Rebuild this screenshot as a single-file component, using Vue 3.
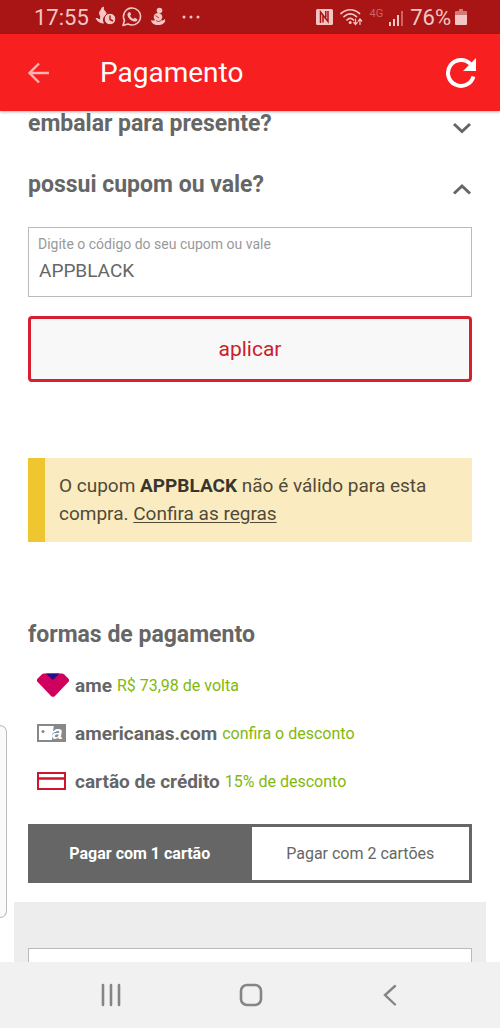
<script setup>
import { ref } from 'vue'

const coupon = ref('APPBLACK')
const cards = ref(1)
const giftOpen = ref(false)
const couponOpen = ref(true)
const methods = [
  { id: 'ame', name: 'ame', note: 'R$ 73,98 de volta' },
  { id: 'store', name: 'americanas.com', note: 'confira o desconto' },
  { id: 'credit', name: 'cartão de crédito', note: '15% de desconto' }
]
</script>

<template>
  <div class="screen">
    <div class="status">
      <span class="clock">17:55</span>
      <svg class="alerts" width="116" height="24" viewBox="0 0 116 24" aria-hidden="true">
        <path d="M6 4c1-2 2-2.500 3-2-.6 2 .2 3 1.600 4.500 1.500 1.600 1 3.500-.4 4.500-2.500 1.500-3 4-1.200 7.500-3.500 0-7-1.800-8.500-5.500 1.500-.4 3 .3 4 1.500C6.500 12 4 10 4 8c0-1.800 1.700-2.500 2-4z" fill="#f3c6c4" />
        <circle cx="15" cy="14" r="5.800" fill="#f3c6c4" stroke="#a91515" stroke-width="1" />
        <path d="M15 10.500V14.500L18 16" fill="none" stroke="#a91515" stroke-width="1.400" />
        <path d="M28 20.500l1.500-5A8.500 8.500 0 1 1 33 19z" fill="none" stroke="#f3c6c4" stroke-width="1.600" stroke-linejoin="round" />
        <path d="M33.500 7.500c.8-.8 1.600-.7 2 .3l.6 1.600-1 1.300c.7 1.500 1.700 2.500 3.200 3.200l1.300-1.200 2 1c1 .5.900 1.200.3 2-1.200 1.300-2.800 1-4.400.3-2-1-3.700-2.700-4.600-4.600-.7-1.600-.6-3 .6-3.900z" fill="#f3c6c4" />
        <circle cx="64.500" cy="5.500" r="2.800" fill="#f3c6c4" />
        <path d="M60 9c3-2 6-1 7 1.500.8 2-.2 3.500-1 4.500 1.300 1 2.800.3 4-1 1 4-3 6-7 6s-6.500-1.500-7-5c1.500.8 3 .8 4 0-1.600-1.500-1.800-4 0-6z" fill="#f3c6c4" />
        <path d="M60.500 10.500l3.500 2.500M61 15.500c2 1.500 4 1 5.500-.5" fill="none" stroke="#a91515" stroke-width=".8" />
        <g fill="#f3c6c4"><circle cx="89" cy="12" r="1.500" /><circle cx="96" cy="12" r="1.500" /><circle cx="103" cy="12" r="1.500" /></g>
      </svg>
      <svg class="signals" width="50" height="24" viewBox="0 0 50 24" aria-hidden="true">
        <rect x="1" y="4" width="17" height="16" rx="1.500" fill="#f3c6c4" />
        <path d="M5.500 18V7l7.500 9.500V6M8 17.500v-7M10.800 6v6.500" fill="none" stroke="#a91515" stroke-width="1.500" />
        <g fill="none" stroke="#f3c6c4" stroke-width="1.700" stroke-linecap="round">
          <path d="M26 8.500c5.500-5 13-5 18.500 0M29 11.700c4-3.500 8.500-3.500 12.500 0M32 15c2-2 4.500-2 6.500 0" />
          <path d="M40.500 14v5M38.800 17.500l1.700 2 1.700-2M45 19.500v-5M43.300 16l1.700-2 1.700 2" stroke-width="1.200" />
        </g>
        <circle cx="35.200" cy="17.500" r="1.500" fill="#f3c6c4" />
      </svg>
      <span class="network">4G</span>
      <svg width="16" height="24" viewBox="0 0 16 24" aria-hidden="true">
        <g fill="#f3c6c4"><rect x="0" y="17" width="2" height="4" /><rect x="4" y="14" width="2" height="7" /><rect x="8" y="10" width="2" height="11" /></g>
        <rect x="12" y="6" width="2" height="15" fill="#cc6461" />
      </svg>
      <span class="percent">76%</span>
      <svg width="12" height="24" viewBox="0 0 12 24" aria-hidden="true">
        <path d="M4 4h4v2h3a1 1 0 0 1 1 1v3H0V7a1 1 0 0 1 1-1h3z" fill="#d07b78" />
        <path d="M0 10h12v9a1 1 0 0 1-1 1H1a1 1 0 0 1-1-1z" fill="#f3c6c4" />
      </svg>
    </div>

    <header class="topbar">
      <button type="button" class="plain" aria-label="Voltar">
        <svg width="24" height="24" viewBox="0 0 24 24"><path d="M22 12H2.500M12 2.500L2.500 12l9.500 9.500" fill="none" stroke="#ffb3b0" stroke-width="2.400" /></svg>
      </button>
      <h1>Pagamento</h1>
      <button type="button" class="plain" aria-label="Recarregar">
        <svg width="32" height="32" viewBox="0 0 32 32">
          <path d="M28.500 19.500A13 13 0 1 1 25.500 7" fill="none" stroke="#fff" stroke-width="4" />
          <path d="M31 1v13H18z" fill="#fff" />
        </svg>
      </button>
    </header>

    <main>
      <div class="content">
        <h2 class="fold">
          <button type="button" :aria-expanded="giftOpen" @click="giftOpen = !giftOpen">
            <span>embalar para presente?</span>
            <svg width="20" height="12" viewBox="0 0 20 12" aria-hidden="true"><path d="M2 2l8 7.500L18 2" fill="none" stroke="#666" stroke-width="3" /></svg>
          </button>
        </h2>
        <h2 class="fold">
          <button type="button" :aria-expanded="couponOpen" @click="couponOpen = !couponOpen">
            <span>possui cupom ou vale?</span>
            <svg width="20" height="12" viewBox="0 0 20 12" aria-hidden="true"><path d="M2 10.500L10 3l8 7.500" fill="none" stroke="#666" stroke-width="3" /></svg>
          </button>
        </h2>

        <form v-if="couponOpen" @submit.prevent>
          <div class="field">
            <label for="coupon">Digite o código do seu cupom ou vale</label>
            <input id="coupon" v-model="coupon" type="text" />
          </div>
          <button type="submit" class="apply">aplicar</button>
        </form>

        <p class="notice">O cupom <strong>APPBLACK</strong> não é válido para esta compra. <a href="#">Confira as regras</a></p>

        <h2 class="methods-title">formas de pagamento</h2>
        <ul class="methods">
          <li v-for="m in methods" :key="m.id">
            <svg v-if="m.id === 'ame'" width="32" height="26" viewBox="0 0 32 26" aria-hidden="true">
              <path d="M7 1.500h18a3 3 0 0 1 2 .8l4.300 4.300a2.500 2.500 0 0 1 0 3.500L18 23.900a3 3 0 0 1-4 0L.7 10.100a2.500 2.500 0 0 1 0-3.500L5 2.300a3 3 0 0 1 2-.8z" fill="#d0005f" />
              <path d="M9 1.500h13.500L17 6.900a2 2 0 0 1-2.600 0z" fill="#2c0a8c" />
            </svg>
            <svg v-else-if="m.id === 'store'" width="32" height="20" viewBox="0 0 32 20" aria-hidden="true">
              <rect x="1" y="2" width="27" height="16" fill="#fff" stroke="#888" stroke-width="2" />
              <path d="M17 2h11v16H15v-7l4-3h-3z" fill="#888" />
              <circle cx="6" cy="8.500" r="1.500" fill="#888" />
              <text x="15" y="16" class="mark">a</text>
            </svg>
            <svg v-else width="32" height="20" viewBox="0 0 32 20" aria-hidden="true">
              <path d="M1 2h27v16H1z" fill="#fff" stroke="#d0142c" stroke-width="2" />
              <path d="M1 7.500h27" stroke="#d0142c" stroke-width="2.500" />
            </svg>
            <strong>{{ m.name }}</strong>
            <span>{{ m.note }}</span>
          </li>
        </ul>

        <div class="split">
          <button v-for="n in 2" :key="n" type="button" :class="{ active: cards === n }" :aria-pressed="cards === n" @click="cards = n">
            Pagar com {{ n }} {{ n === 1 ? 'cartão' : 'cartões' }}
          </button>
        </div>
      </div>
      <section class="card-form">
        <input type="text" aria-label="Número do cartão" />
      </section>
      <div class="edge-handle"></div>
    </main>

    <nav class="system">
      <button type="button" class="plain" aria-label="Recentes">
        <svg width="24" height="24" viewBox="0 0 24 24"><path d="M4 2v20M12 2v20M20 2v20" stroke="#858585" stroke-width="2.600" stroke-linecap="round" /></svg>
      </button>
      <button type="button" class="plain" aria-label="Início">
        <svg width="24" height="24" viewBox="0 0 24 24"><rect x="2" y="2" width="20" height="20" rx="6" fill="none" stroke="#858585" stroke-width="2.600" /></svg>
      </button>
      <button type="button" class="plain" aria-label="Voltar">
        <svg width="24" height="24" viewBox="0 0 24 24"><path d="M17 3L7 12l10 9.500" fill="none" stroke="#858585" stroke-width="2.400" stroke-linecap="round" /></svg>
      </button>
    </nav>
  </div>
</template>

<style>
body {
  margin: 0;
  background: #fff;
}
</style>

<style scoped>
.screen {
  height: 100vh;
  display: flex;
  flex-direction: column;
  font-family: Roboto, "Liberation Sans", sans-serif;
  color: #666;
  background: #fff;
}
.screen *,
.screen {
  box-sizing: border-box;
}
button,
input {
  font: inherit;
  color: inherit;
}
svg {
  display: block;
  flex: none;
}
.plain {
  padding: 0;
  border: 0;
  background: none;
}
.status {
  flex: none;
  height: 34px;
  padding: 0 33px 0 34px;
  display: flex;
  align-items: center;
  background: #a91515;
  color: #f3c6c4;
  font-size: 22px;
}
.alerts {
  margin-left: 6px;
}
.signals {
  margin-left: auto;
}
.network {
  margin: 0 6px 8px 4px;
  font-size: 11px;
  color: #cc6461;
}
.percent {
  margin: 0 4px 0 5px;
}
.topbar {
  position: relative;
  z-index: 1;
  flex: none;
  height: 77px;
  padding: 0 23px 0 27px;
  display: flex;
  align-items: center;
  background: #f71f20;
  box-shadow: 0 1px 3px rgba(0, 0, 0, 0.3);
}
h1 {
  flex: 1;
  margin: 0 0 0 49px;
  font-size: 28px;
  font-weight: 400;
  color: #fff;
}
main {
  position: relative;
  flex: 1;
  min-height: 0;
  display: flex;
  flex-direction: column;
  overflow: hidden;
}
.content {
  flex: none;
  padding: 0 28px;
}
h2 {
  margin: 0;
  font-size: 23px;
  line-height: 26px;
  font-weight: 700;
}
.fold {
  margin-bottom: 35px;
}
.fold button {
  width: 100%;
  padding: 0;
  border: 0;
  background: none;
  display: flex;
  align-items: flex-end;
  justify-content: space-between;
  text-align: left;
}
.fold svg {
  margin-bottom: 3px;
}
form {
  margin-top: -6px;
}
.field {
  height: 70px;
  padding: 8px 9px;
  border: 1px solid #bbb;
}
.field label {
  display: block;
  font-size: 14px;
  line-height: 16px;
  color: #999;
}
.field input {
  display: block;
  width: 100%;
  height: 36px;
  padding: 0 1px;
  border: 0;
  outline: 0;
  background: none;
  font-size: 19px;
}
.apply {
  display: block;
  width: 100%;
  height: 66px;
  margin-top: 19px;
  border: 3px solid #d6202f;
  border-radius: 4px;
  background: #f8f8f8;
  color: #c9202f;
  font-size: 21px;
}
.notice {
  margin: 76px 0 0;
  padding: 14px;
  border-left: 17px solid #efc530;
  background: #faecc0;
  font-size: 19px;
  line-height: 28px;
  color: #514a38;
}
.notice strong {
  color: #38352d;
}
.notice a {
  color: inherit;
  text-underline-offset: 2px;
}
.methods-title {
  margin-top: 80px;
}
.methods {
  list-style: none;
  margin: 13px 0 19px;
  padding: 0 0 0 9px;
}
.methods li {
  height: 48px;
  display: flex;
  align-items: center;
}
.methods strong {
  margin: 0 5px 0 6px;
  font-size: 19px;
}
.methods span {
  font-size: 16px;
  color: #82b80c;
}
.mark {
  font: italic 700 19px "Liberation Sans", sans-serif;
  fill: #fff;
}
.split {
  height: 59px;
  display: flex;
  border: 3px solid #666;
}
.split button {
  flex: 1;
  border: 0;
  background: #fff;
  font-size: 16px;
}
.split button + button {
  border-left: 3px solid #666;
}
.split .active {
  background: #666;
  color: #fff;
  font-weight: 700;
}
.card-form {
  flex: none;
  margin: 19px 14px 0;
  padding: 46px 14px;
  background: #ededed;
}
.card-form input {
  display: block;
  width: 100%;
  height: 70px;
  border: 1px solid #bbb;
  background: #fff;
}
.edge-handle {
  position: absolute;
  left: 0;
  top: 614px;
  width: 7px;
  height: 193px;
  border: 1px solid #bbb;
  border-left: 0;
  border-radius: 0 7px 7px 0;
  background: #fafafa;
}
.system {
  flex: none;
  height: 66px;
  padding: 0 40px 0 41px;
  display: flex;
  justify-content: space-between;
  background: #f1f1f1;
}
.system button {
  flex: 1;
  display: flex;
  align-items: center;
  justify-content: center;
}
</style>
